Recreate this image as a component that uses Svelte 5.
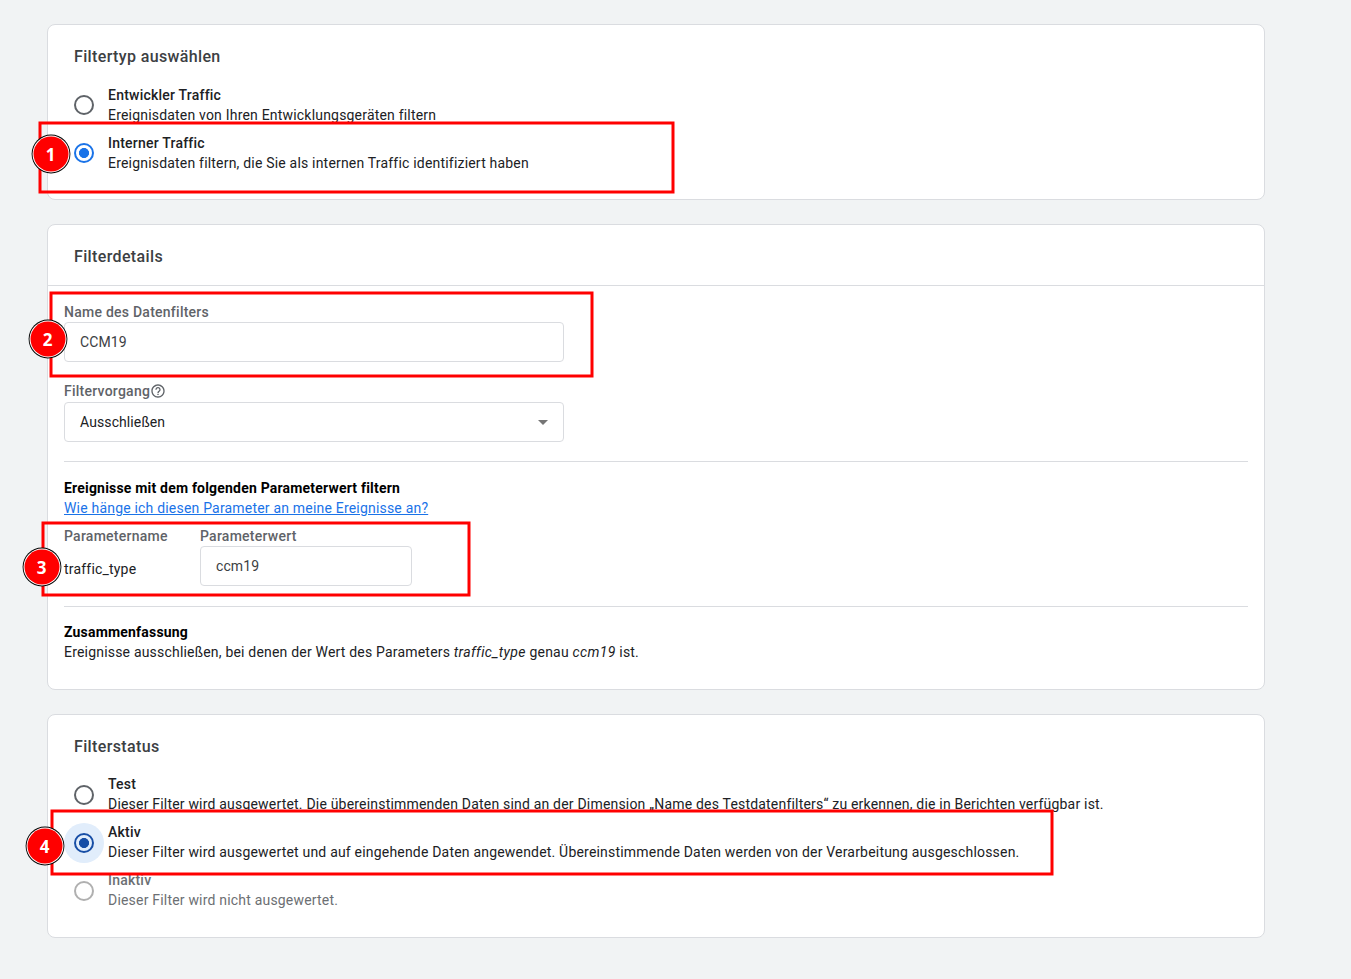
<script lang="ts">

	interface Option {
		title: string;
		text: string;
		checked?: boolean;
		focused?: boolean;
		disabled?: boolean;
	}

	const types: Option[] = [
		{ title: 'Entwickler Traffic', text: 'Ereignisdaten von Ihren Entwicklungsgeräten filtern' },
		{ title: 'Interner Traffic', text: 'Ereignisdaten filtern, die Sie als internen Traffic identifiziert haben', checked: true }
	];

	const states: Option[] = [
		{ title: 'Test', text: 'Dieser Filter wird ausgewertet. Die übereinstimmenden Daten sind an der Dimension „Name des Testdatenfilters“ zu erkennen, die in Berichten verfügbar ist.' },
		{ title: 'Aktiv', text: 'Dieser Filter wird ausgewertet und auf eingehende Daten angewendet. Übereinstimmende Daten werden von der Verarbeitung ausgeschlossen.', checked: true, focused: true },
		{ title: 'Inaktiv', text: 'Dieser Filter wird nicht ausgewertet.', disabled: true }
	];

	// numbered marks: the frame and the centre of its badge
	const marks = [
		{ x: 40, y: 123, w: 633, h: 69, cx: 51, cy: 154 },
		{ x: 51, y: 293, w: 541, h: 83, cx: 48, cy: 339 },
		{ x: 43, y: 523, w: 426, h: 72, cx: 42, cy: 567 },
		{ x: 52, y: 811, w: 1000, h: 63, cx: 45, cy: 846 }
	];

	let name = $state('CCM19');
	let value = $state('ccm19');
</script>

<!-- list of radio options -->
{#snippet options(list: Option[])}
	<div class="options">
		{#each list as o}
			<div class="option" class:disabled={o.disabled}>
				<span class="radio" class:checked={o.checked} class:focused={o.focused}></span>
				<div class="label">
					<strong>{o.title}</strong>
					<span class="line">{o.text}</span>
				</div>
			</div>
		{/each}
	</div>
{/snippet}

<main>
	<section class="card type">
		<h2>Filtertyp auswählen</h2>
		{@render options(types)}
	</section>

	<section class="card details">
		<header><h2>Filterdetails</h2></header>
		<div class="body">
			<div class="field">
				<label for="name">Name des Datenfilters</label>
				<input id="name" bind:value={name} />
			</div>
			<div class="field second">
				<span class="caption">Filtervorgang<svg class="help" viewBox="0 0 24 24"><path d="M11 18h2v-2h-2v2zm1-16C6.48 2 2 6.48 2 12s4.480 10 10 10 10-4.480 10-10S17.520 2 12 2zm0 18c-4.410 0-8-3.590-8-8s3.590-8 8-8 8 3.590 8 8-3.590 8-8 8zm0-14c-2.210 0-4 1.790-4 4h2c0-1.100.9-2 2-2s2 .9 2 2c0 2-3 1.750-3 5h2c0-2.250 3-2.500 3-5 0-2.210-1.790-4-4-4z" /></svg></span>
				<div class="select"><span>Ausschließen</span><i class="arrow"></i></div>
			</div>
			<hr />
			<h3>Ereignisse mit dem folgenden Parameterwert filtern</h3>
			<a href="#parameter">Wie hänge ich diesen Parameter an meine Ereignisse an?</a>
			<div class="params">
				<div class="param">
					<span class="caption">Parametername</span>
					<span class="fixed">traffic_type</span>
				</div>
				<div class="param">
					<label for="value">Parameterwert</label>
					<input id="value" bind:value />
				</div>
			</div>
			<hr />
			<h3>Zusammenfassung</h3>
			<p>Ereignisse ausschließen, bei denen der Wert des Parameters <em>traffic_type</em> genau <em>{value}</em> ist.</p>
		</div>
	</section>

	<section class="card status">
		<h2>Filterstatus</h2>
		{@render options(states)}
	</section>

	<!-- marks lie over the cards -->
	<svg class="marks" width="1351" height="979">
		{#each marks as m, i}
			<rect x={m.x} y={m.y} width={m.w} height={m.h} />
			<circle class="ring" cx={m.cx} cy={m.cy} r="19.4" />
			<circle class="gap" cx={m.cx} cy={m.cy} r="18.5" />
			<circle class="dot" cx={m.cx} cy={m.cy} r="17.500" />
			<text x={m.cx - 0.5} y={m.cy + 6.5}>{i + 1}</text>
		{/each}
	</svg>
</main>

<style>
	:global(body) {
		background: #f1f3f4;
	}

	main {
		position: relative;
		box-sizing: border-box;
		width: 1351px;
		height: 979px;
		padding: 24px 86px 0 47px;
		display: flex;
		flex-direction: column;
		gap: 24px;
		overflow: hidden;
		font: 400 14px/20px Roboto, "Liberation Sans", sans-serif;
		letter-spacing: 0.195px;
		color: #202124;
	}

	.card {
		box-sizing: border-box;
		background: #fff;
		border: 1px solid #dadce0;
		border-radius: 8px;
	}

	.type {
		height: 176px;
		padding: 20px 26px 0;
	}

	.details {
		height: 466px;
	}

	.status {
		height: 224px;
		padding: 20px 26px 0;
	}

	h2 {
		margin: 0;
		font-size: 16px;
		font-weight: 500;
		line-height: 24px;
		letter-spacing: 0.36px;
		color: #3c4043;
	}

	h3 {
		margin: 0;
		font-size: 14px;
		font-weight: 700;
		line-height: 20px;
		color: #000;
	}

	/* radio options */
	.options {
		display: flex;
		flex-direction: column;
		gap: 8px;
		margin-top: 16px;
	}

	.status .options {
		margin-top: 15px;
	}

	.option {
		display: flex;
		gap: 14px;
		height: 40px;
	}

	.label {
		display: flex;
		flex-direction: column;
		white-space: nowrap;
	}

	.label strong {
		font-weight: 500;
		letter-spacing: 0.22px;
	}

	.radio {
		box-sizing: border-box;
		flex: none;
		width: 20px;
		height: 20px;
		margin-top: 10px;
		border: 2px solid #5f6368;
		border-radius: 50%;
	}

	.status .radio {
		margin-top: 11px;
	}

	.radio.checked {
		border-color: #1a73e8;
		background: radial-gradient(circle, #1a73e8 4.700px, #fff 5.300px);
	}

	.radio.focused {
		border-color: #174ea6;
		background: radial-gradient(circle, #174ea6 4.700px, #e1edfb 5.300px);
		box-shadow: 0 0 0 10px #e1edfb;
	}

	.disabled {
		color: #6c6f73;
	}

	.disabled .radio {
		border-color: #b0b0b0;
	}

	/* filter details */
	header {
		box-sizing: border-box;
		height: 61px;
		padding: 20px 26px 0;
		border-bottom: 1px solid #dadce0;
	}

	.body {
		padding: 16px 16px 0;
	}

	.field,
	.param {
		display: flex;
		flex-direction: column;
	}

	.field {
		width: 500px;
	}

	.second {
		margin-top: 19px;
	}

	.second .caption {
		height: 21px;
	}

	label,
	.caption {
		display: flex;
		align-items: flex-start;
		height: 20px;
		font-weight: 500;
		letter-spacing: 0.25px;
		color: #5f6368;
	}

	.help {
		width: 16px;
		height: 16px;
		margin-top: 2px;
		fill: #5f6368;
	}

	input,
	.select {
		box-sizing: border-box;
		width: 100%;
		height: 40px;
		padding: 0 15px;
		border: 1px solid #dadce0;
		border-radius: 4px;
		background: #fff;
		font: inherit;
		letter-spacing: 0.1px;
		color: #3c4043;
	}

	.select {
		display: flex;
		align-items: center;
		justify-content: space-between;
		color: #202124;
	}

	.arrow {
		border: 5px solid transparent;
		border-top-color: #757575;
		border-bottom: 0;
	}

	hr {
		height: 1px;
		margin: 19px 0 16px;
		border: 0;
		background: #dadce0;
	}

	a {
		display: block;
		width: fit-content;
		color: #1a73e8;
		text-decoration: underline;
	}

	.params {
		display: grid;
		grid-template-columns: 104px 212px;
		gap: 32px;
		margin-top: 8px;
	}

	.params + hr {
		margin: 20px 0 15px;
	}

	.fixed {
		margin-top: 13px;
	}

	p {
		margin: 0;
	}

	em {
		letter-spacing: 0.35px;
	}

	/* numbered marks */
	.marks {
		position: absolute;
		left: 0;
		top: 0;
		pointer-events: none;
	}

	.marks rect {
		fill: none;
		stroke: #f00;
		stroke-width: 3;
	}

	.ring {
		fill: #000;
	}

	.gap {
		fill: #fff;
	}

	.dot {
		fill: #f00;
	}

	.marks text {
		fill: #fff;
		font: 700 17px "Open Sans", sans-serif;
		letter-spacing: 0;
		text-anchor: middle;
	}
</style>
